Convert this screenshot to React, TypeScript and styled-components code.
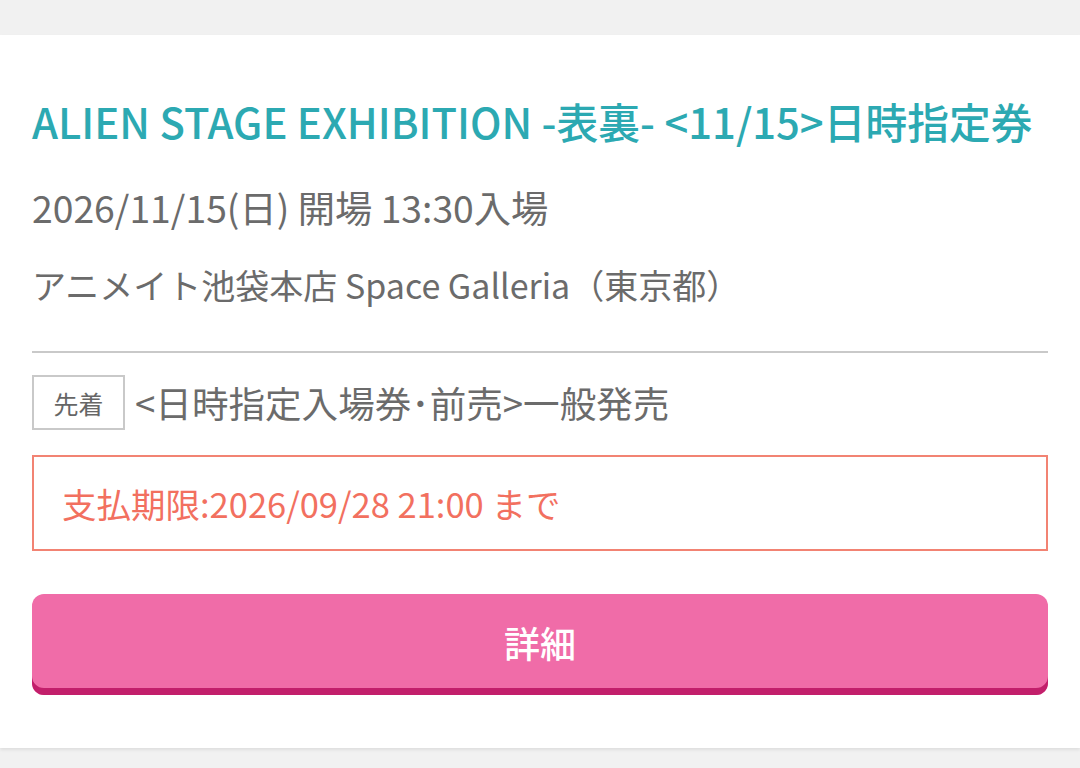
import React from "react";
import styled, { createGlobalStyle } from "styled-components";

const Global = createGlobalStyle`
  html, body { margin: 0; padding: 0; background: #f1f1f1; }
  body { font-family: "Noto Sans CJK JP", "Noto Sans", sans-serif; }
`;

const Page = styled.div`
  padding-top: 35px;
  min-height: 768px;
  box-sizing: border-box;
`;

const Card = styled.section`
  background: #ffffff;
  padding: 58px 32px 53px;
  box-shadow: 0 2px 3px rgba(0, 0, 0, 0.08);
`;

const Title = styled.h1`
  margin: 0;
  font-size: 41.8px;
  font-weight: 500;
  line-height: 56px;
  color: #2ca9b2;
  white-space: nowrap;
`;

const Info = styled.p<{ $top: number; $size: number }>`
  margin: ${(p) => p.$top}px 0 0;
  font-size: ${(p) => p.$size}px;
  line-height: 50px;
  color: #6b6b6b;
  font-weight: 400;
  white-space: nowrap;
`;

const Divider = styled.hr`
  border: 0;
  height: 2px;
  background: #c9c9c9;
  margin: 41px 0 0;
`;

const SaleRow = styled.div`
  display: flex;
  align-items: center;
  gap: 10px;
  margin-top: 22px;
`;

const Badge = styled.span`
  display: inline-flex;
  align-items: center;
  justify-content: center;
  flex: none;
  width: 93px;
  height: 55px;
  box-sizing: border-box;
  border: 2px solid #c9c9c9;
  font-size: 25px;
  color: #666;
`;

const SaleName = styled.span`
  font-size: 36.6px;
  color: #6b6b6b;
  white-space: nowrap;
`;

const Deadline = styled.div`
  margin-top: 25px;
  height: 96px;
  box-sizing: border-box;
  border: 2px solid #f28373;
  display: flex;
  align-items: center;
  padding: 0 28px;
  font-size: 34.5px;
  color: #f2705f;
  white-space: nowrap;
`;

const DetailButton = styled.button`
  display: flex;
  align-items: center;
  justify-content: center;
  width: 100%;
  margin-top: 43px;
  height: 101px;
  padding: 0 0 6px;
  border: 0;
  border-radius: 12px;
  background: #f06ca8;
  box-shadow: inset 0 -7px 0 #c21f6b;
  font-family: inherit;
  font-size: 36px;
  font-weight: 500;
  color: #ffffff;
  cursor: pointer;
`;

export default function App() {
  return (
    <Page>
      <Global />
      <Card>
        <Title>ALIEN STAGE EXHIBITION -表裏- &lt;11/15&gt;日時指定券</Title>
        <Info $top={33} $size={37.3}>2026/11/15(日) 開場 13:30入場</Info>
        <Info $top={28} $size={34}>アニメイト池袋本店 Space Galleria（東京都）</Info>
        <Divider />
        <SaleRow>
          <Badge>先着</Badge>
          <SaleName>&lt;日時指定入場券･前売&gt;一般発売</SaleName>
        </SaleRow>
        <Deadline>支払期限:2026/09/28 21:00 まで</Deadline>
        <DetailButton>詳細</DetailButton>
      </Card>
    </Page>
  );
}
